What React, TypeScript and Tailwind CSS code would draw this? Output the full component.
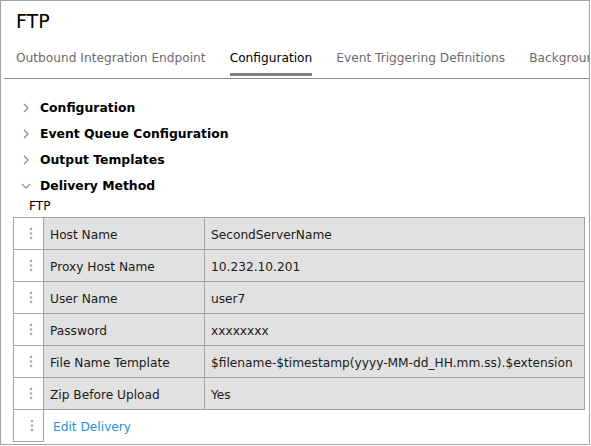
import React from "react";

const rows: [string, string][] = [
  ["Host Name", "SecondServerName"],
  ["Proxy Host Name", "10.232.10.201"],
  ["User Name", "user7"],
  ["Password", "xxxxxxxx"],
  ["File Name Template", "$filename-$timestamp(yyyy-MM-dd_HH.mm.ss).$extension"],
  ["Zip Before Upload", "Yes"],
];

function Dots() {
  return (
    <svg width="4" height="14" viewBox="0 0 4 14" className="block">
      <circle cx="2" cy="2" r="1.3" fill="#a8a8a8" />
      <circle cx="2" cy="6.5" r="1.3" fill="#a8a8a8" />
      <circle cx="2" cy="11" r="1.3" fill="#a8a8a8" />
    </svg>
  );
}

function ChevronRight() {
  return (
    <svg width="10" height="10" viewBox="0 0 10 10" className="block">
      <polyline points="3,1 7,5 3,9" fill="none" stroke="#8a8a8a" strokeWidth="1.2" />
    </svg>
  );
}

function ChevronDown() {
  return (
    <svg width="10" height="10" viewBox="0 0 10 10" className="block">
      <polyline points="1,3 5,7 9,3" fill="none" stroke="#8a8a8a" strokeWidth="1.2" />
    </svg>
  );
}

export default function App() {
  const tabs = [
    "Outbound Integration Endpoint",
    "Configuration",
    "Event Triggering Definitions",
    "Background Processes",
  ];
  const sections = ["Configuration", "Event Queue Configuration", "Output Templates"];
  return (
    <div
      className="w-[590px] h-[445px] border border-[#a3a3a3] bg-white overflow-hidden text-[12.2px] text-[#1a1a1a]"
      style={{ fontFamily: '"DejaVu Sans", Verdana, sans-serif' }}
    >
      <div className="h-[39px] pl-[15px] pt-[7px]">
        <div className="text-[19px] leading-[26px] text-black">FTP</div>
      </div>
      <div className="ml-[3px] flex h-[39px] border-b border-[#8c8c8c] overflow-hidden whitespace-nowrap">
        {tabs.map((t, i) => (
          <div key={t} className="flex flex-col px-[12px] shrink-0">
            <div className={"pt-[10px] leading-[16px] " + (i === 1 ? "text-black" : "text-[#6b6b6b]")}>{t}</div>
            <div className={"mt-auto mb-[2px] h-[3px] " + (i === 1 ? "bg-[#808080]" : "")} />
          </div>
        ))}
      </div>
      <div className="pt-[16px]">
        {sections.map((s) => (
          <div key={s} className="flex items-center h-[26px] pl-[20px]">
            <span className="w-[19px] flex items-center">
              <ChevronRight />
            </span>
            <span className="font-bold text-[12.4px] text-black">{s}</span>
          </div>
        ))}
        <div className="flex items-center h-[26px] pl-[20px]">
          <span className="w-[19px] flex items-center">
            <ChevronDown />
          </span>
          <span className="font-bold text-[12.4px] text-black">Delivery Method</span>
        </div>
      </div>
      <div className="pl-[28px] h-[14px] leading-[14px] text-black">FTP</div>
      <div className="ml-[12px] mt-[4px] w-[572px]">
        {rows.map(([k, v], i) => (
          <div
            key={k}
            className={
              "flex border-x border-b border-[#a3a3a3] " +
              (i === 0 ? "h-[33px] border-t" : "h-[32px]")
            }
          >
            <div className="w-[30px] shrink-0 border-r border-[#a3a3a3] bg-white flex items-center pl-[15px]">
              <Dots />
            </div>
            <div className="w-[161px] shrink-0 border-r border-[#a3a3a3] bg-[#e1e1e1] flex items-center pl-[6px] pt-[3px] whitespace-nowrap">
              {k}
            </div>
            <div className="flex-1 bg-[#e1e1e1] flex items-center pl-[6px] pt-[3px] whitespace-nowrap overflow-hidden">
              {v}
            </div>
          </div>
        ))}
        <div className="flex h-[32px]">
          <div className="w-[31px] shrink-0 border-l border-r border-b border-[#a3a3a3] flex items-center pl-[16px]">
            <Dots />
          </div>
          <div className="flex items-center pl-[9px] pt-[2px] text-[#2196d6]">Edit Delivery</div>
        </div>
      </div>
    </div>
  );
}
